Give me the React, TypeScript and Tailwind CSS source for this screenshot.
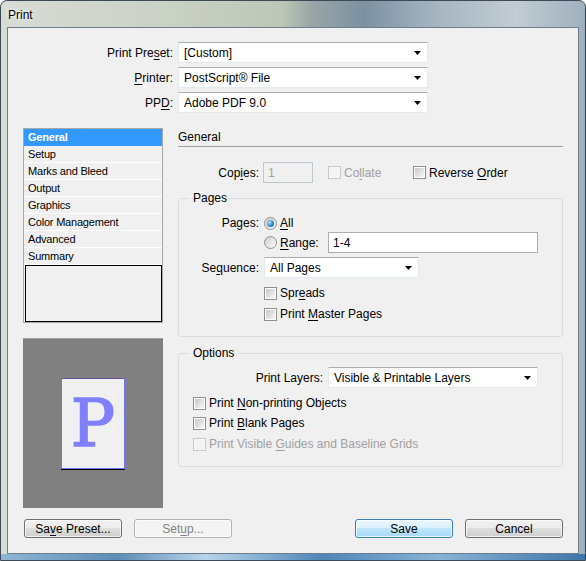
import React from "react";

function Key({ children }: { children: React.ReactNode }) {
  return <span className="underline decoration-1 underline-offset-[2px]">{children}</span>;
}

function Arrow() {
  return (
    <svg width="7" height="4" viewBox="0 0 7 4" className="shrink-0">
      <path d="M0 0h7L3.5 4z" fill="#000" />
    </svg>
  );
}

function Select({ value, className }: { value: string; className: string }) {
  return (
    <div
      className={`flex h-[21px] items-center justify-between border border-[#e3e9ef] border-t-[#abadb3] bg-white pl-[5px] pr-[6px] ${className}`}
    >
      <span>{value}</span>
      <Arrow />
    </div>
  );
}

function CheckBox({ disabled }: { disabled?: boolean }) {
  return (
    <span
      className={`flex h-[13px] w-[13px] shrink-0 items-center justify-center border ${
        disabled ? "border-[#c9c9c9] bg-[#f7f7f7]" : "border-[#8f8f8f] bg-white"
      }`}
    >
      <span
        className={`h-[9px] w-[9px] ${
          disabled ? "bg-[#f3f3f3]" : "bg-[linear-gradient(135deg,#c8c8c8,#f7f7f7)]"
        }`}
      />
    </span>
  );
}

function Check({ children, disabled }: { children: React.ReactNode; disabled?: boolean }) {
  return (
    <div className={`flex h-[16px] items-center gap-[3px] ${disabled ? "text-[#a0a0a0]" : ""}`}>
      <CheckBox disabled={disabled} />
      <span>{children}</span>
    </div>
  );
}

function Radio({ checked }: { checked?: boolean }) {
  return (
    <span className="flex h-[13px] w-[13px] shrink-0 items-center justify-center rounded-full border border-[#8f8f8f] bg-[linear-gradient(135deg,#cfcfcf,#fbfbfb)]">
      {checked && (
        <span className="h-[7px] w-[7px] rounded-full bg-[radial-gradient(circle_at_35%_35%,#b5e0fa,#2a7fbf_60%,#0d4b7c)]" />
      )}
    </span>
  );
}

function Button({
  children,
  kind = "normal",
}: {
  children: React.ReactNode;
  kind?: "normal" | "default" | "disabled";
}) {
  const look =
    kind === "default"
      ? "border-[#3c7fb1] bg-[linear-gradient(#eaf6fd_0%,#d9f0fc_50%,#bee6fd_50%,#a7d9f5_100%)]"
      : kind === "disabled"
        ? "border-[#adb2b5] bg-[#f4f4f4] text-[#838383]"
        : "border-[#707070] bg-[linear-gradient(#f2f2f2_0%,#ebebeb_50%,#dddddd_50%,#cfcfcf_100%)]";
  return (
    <div
      className={`flex h-[19px] w-[98px] items-center justify-center rounded-[3px] border shadow-[inset_0_0_0_1px_rgba(255,255,255,0.7)] ${look}`}
    >
      {children}
    </div>
  );
}

function Group({ title, children }: { title: string; children: React.ReactNode }) {
  return (
    <div className="w-[385px] rounded-[3px] border border-[#d5dfe5]">
      <div className="-mt-[9px] ml-[11px] w-fit bg-[#f0f0f0] px-[3px] leading-[16px]">{title}</div>
      {children}
    </div>
  );
}

const sections = [
  "General",
  "Setup",
  "Marks and Bleed",
  "Output",
  "Graphics",
  "Color Management",
  "Advanced",
  "Summary",
];

export default function App() {
  return (
    <div className="flex h-[561px] w-[586px] flex-col overflow-hidden rounded-t-[7px] border border-[#3b4a56] bg-[linear-gradient(90deg,#d7dcd5_0%,#c9d0c4_30%,#bdc7b6_48%,#9aa6a6_53%,#7d91a2_62%,#a7b6c2_75%,#c2ccd3_88%,#9fb0bd_100%)] font-['Liberation_Sans',Arial,sans-serif] text-[12px] text-black">
      <div className="flex h-[26px] shrink-0 items-center pl-[7px] pt-[2px] [text-shadow:0_0_6px_#fff,0_0_3px_#fff]">
        Print
      </div>

      <div className="mx-[6px] flex h-[527px] shrink-0 flex-col border border-[#6d7f8e] bg-[#f0f0f0]">
        {/* presets */}
        <div className="flex flex-col gap-[4px] pt-[14px]">
          <div className="flex h-[21px] items-center gap-[5px]">
            <span className="w-[165px] text-right">
              Print Pre<Key>s</Key>et:
            </span>
            <Select value="[Custom]" className="w-[250px]" />
          </div>
          <div className="flex h-[21px] items-center gap-[5px]">
            <span className="w-[165px] text-right">
              <Key>P</Key>rinter:
            </span>
            <Select value="PostScript® File" className="w-[250px]" />
          </div>
          <div className="flex h-[21px] items-center gap-[5px]">
            <span className="w-[165px] text-right">
              PP<Key>D</Key>:
            </span>
            <Select value="Adobe PDF 9.0" className="w-[250px]" />
          </div>
        </div>

        <div className="mt-[15px] flex gap-[15px] pl-[15px]">
          {/* left column */}
          <div className="flex w-[140px] flex-col">
            <div className="flex h-[195px] flex-col border border-[#a8a8a8] text-[11px] tracking-[-0.2px]">
              {sections.map((s, i) => (
                <div
                  key={s}
                  className={`flex h-[17px] items-center border-b pl-[4px] ${
                    i === 0 ? "border-[#3399ff] bg-[#3399ff] font-bold text-white" : "border-white"
                  }`}
                >
                  {s}
                </div>
              ))}
              <div className="ml-[1px] flex-1 border border-black" />
            </div>
            <div className="mt-[15px] flex h-[170px] items-center justify-center border-t border-[#a0a0a0] bg-[#808080]">
              <div className="flex h-[91px] w-[64px] items-center justify-center border border-[#7272ff] border-t-[#6a4fa0] bg-[#f0f0f0] shadow-[0_1px_0_#000]">
                <span className="font-['DejaVu_Serif',serif] text-[66px] leading-none text-[#8080ff] [-webkit-text-stroke:1.5px_#8080ff]">
                  P
                </span>
              </div>
            </div>
          </div>

          {/* right column */}
          <div className="flex w-[385px] flex-col">
            <div className="h-[19px] border-b border-[#a0a0a0] leading-[18px]">General</div>

            <div className="mt-[15px] flex h-[21px] items-center">
              <span className="w-[81px] text-right">
                Cop<Key>i</Key>es:
              </span>
              <div className="ml-[4px] flex h-[21px] w-[50px] items-center border border-[#c3c7cb] bg-[#f0f0f0] pl-[4px] text-[#a0a0a0]">
                1
              </div>
              <div className="ml-[15px] w-[85px]">
                <Check disabled>
                  Co<Key>l</Key>late
                </Check>
              </div>
              <Check>
                Reverse <Key>O</Key>rder
              </Check>
            </div>

            <div className="mt-[15px]">
              <Group title="Pages">
                <div className="mt-[9px] flex h-[16px] items-center">
                  <span className="w-[80px] text-right">Pages:</span>
                  <span className="ml-[5px] flex items-center gap-[3px]">
                    <Radio checked />
                    <span>
                      <Key>A</Key>ll
                    </span>
                  </span>
                </div>
                <div className="mt-[1px] flex h-[21px] items-center pl-[85px]">
                  <span className="flex w-[64px] items-center gap-[3px]">
                    <Radio />
                    <span>
                      <Key>R</Key>ange:
                    </span>
                  </span>
                  <div className="flex h-[21px] w-[210px] items-center border border-[#abadb3] bg-white pl-[4px]">
                    1-4
                  </div>
                </div>
                <div className="mt-[4px] flex h-[21px] items-center">
                  <span className="w-[80px] text-right">
                    Se<Key>q</Key>uence:
                  </span>
                  <Select value="All Pages" className="ml-[5px] w-[155px]" />
                </div>
                <div className="mt-[7px] pl-[85px]">
                  <Check>
                    Spr<Key>e</Key>ads
                  </Check>
                </div>
                <div className="mt-[5px] pb-[14px] pl-[85px]">
                  <Check>
                    Print <Key>M</Key>aster Pages
                  </Check>
                </div>
              </Group>
            </div>

            <div className="mt-[16px]">
              <Group title="Options">
                <div className="mt-[6px] flex h-[21px] items-center">
                  <span className="w-[144px] text-right">Print Layers:</span>
                  <Select value="Visible & Printable Layers" className="ml-[5px] w-[210px]" />
                </div>
                <div className="flex flex-col pb-[14px] pl-[14px]">
                  <div className="mt-[7px]">
                    <Check>
                      Print <Key>N</Key>on-printing Objects
                    </Check>
                  </div>
                  <div className="mt-[4px]">
                    <Check>
                      Print <Key>B</Key>lank Pages
                    </Check>
                  </div>
                  <div className="mt-[5px]">
                    <Check disabled>
                      Print Visible <Key>G</Key>uides and Baseline Grids
                    </Check>
                  </div>
                </div>
              </Group>
            </div>
          </div>
        </div>

        <div className="mt-[11px] flex justify-between pl-[16px] pr-[15px]">
          <div className="flex gap-[12px]">
            <Button>
              Sa<Key>v</Key>e Preset...
            </Button>
            <Button kind="disabled">
              Set<Key>u</Key>p...
            </Button>
          </div>
          <div className="flex gap-[12px]">
            <Button kind="default">Save</Button>
            <Button>Cancel</Button>
          </div>
        </div>
      </div>

      <div className="flex-1 bg-[linear-gradient(90deg,#8fb6d3_0%,#5d8db6_20%,#b7d4ea_35%,#4f86b8_55%,#88b3d6_75%,#3f76a8_100%)]" />
    </div>
  );
}
